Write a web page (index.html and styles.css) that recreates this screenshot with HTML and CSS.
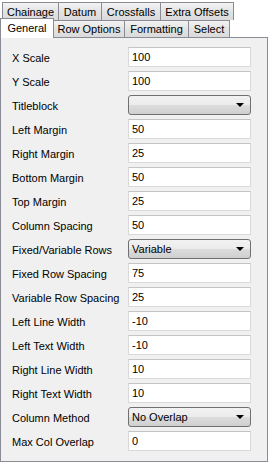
FILE: index.html
```html
<!DOCTYPE html>
<html lang="en">
  <head>
    <meta charset="UTF-8" />
    <meta name="viewport" content="width=device-width, initial-scale=1.0" />
    <title>Plot Settings</title>
    <link rel="stylesheet" href="styles.css">
  </head>
  <body>
    <div class="tabs">
      <div class="tab-row tab-row-back">
        <span class="tab tab-chainage">Chainage</span>
        <span class="tab tab-datum">Datum</span>
        <span class="tab tab-crossfalls">Crossfalls</span>
        <span class="tab tab-extra">Extra Offsets</span>
      </div>
      <div class="tab-row tab-row-front">
        <span class="tab tab-general active">General</span>
        <span class="tab tab-rows">Row Options</span>
        <span class="tab tab-format">Formatting</span>
        <span class="tab tab-select">Select</span>
      </div>
    </div>

    <div class="panel">
      <div class="form-row">
        <label>X Scale</label>
        <div class="field">100</div>
      </div>
      <div class="form-row">
        <label>Y Scale</label>
        <div class="field">100</div>
      </div>
      <div class="form-row">
        <label>Titleblock</label>
        <div class="combo"><span></span><i class="arrow"></i></div>
      </div>
      <div class="form-row">
        <label>Left Margin</label>
        <div class="field">50</div>
      </div>
      <div class="form-row">
        <label>Right Margin</label>
        <div class="field">25</div>
      </div>
      <div class="form-row">
        <label>Bottom Margin</label>
        <div class="field">50</div>
      </div>
      <div class="form-row">
        <label>Top Margin</label>
        <div class="field">25</div>
      </div>
      <div class="form-row">
        <label>Column Spacing</label>
        <div class="field">50</div>
      </div>
      <div class="form-row">
        <label>Fixed/Variable Rows</label>
        <div class="combo"><span>Variable</span><i class="arrow"></i></div>
      </div>
      <div class="form-row">
        <label>Fixed Row Spacing</label>
        <div class="field">75</div>
      </div>
      <div class="form-row">
        <label>Variable Row Spacing</label>
        <div class="field">25</div>
      </div>
      <div class="form-row">
        <label>Left Line Width</label>
        <div class="field">-10</div>
      </div>
      <div class="form-row">
        <label>Left Text Width</label>
        <div class="field">-10</div>
      </div>
      <div class="form-row">
        <label>Right Line Width</label>
        <div class="field">10</div>
      </div>
      <div class="form-row">
        <label>Right Text Width</label>
        <div class="field">10</div>
      </div>
      <div class="form-row">
        <label>Column Method</label>
        <div class="combo"><span>No Overlap</span><i class="arrow"></i></div>
      </div>
      <div class="form-row">
        <label>Max Col Overlap</label>
        <div class="field">0</div>
      </div>
    </div>
  </body>
</html>
```

FILE: styles.css
```css
* {
  font-family: "Liberation Sans", Arial, sans-serif;
  margin: 0;
  padding: 0;
  box-sizing: border-box;
}

body {
  background: #fff;
  font-size: 11px;
  color: #000;
  width: 271px;
  height: 465px;
  overflow: hidden;
}

/* Tabs */
.tab-row {
  display: flex;
}

.tab-row-back {
  padding: 2px 0 0 2px;
  height: 20px;
}

.tab-row-front {
  height: 17px;
  align-items: flex-end;
}

.tab {
  display: flex;
  align-items: center;
  justify-content: center;
  height: 100%;
  border: 1px solid #898c95;
  border-bottom: none;
  margin-left: -1px;
  background: linear-gradient(#f3f3f3, #e3e3e3 50%, #dadada);
  white-space: nowrap;
}

.tab:first-child {
  margin-left: 0;
}

.tab-row-back .tab {
  height: 18px;
}

.tab-chainage { width: 57px; }
.tab-datum { width: 44px; }
.tab-crossfalls { width: 60px; }
.tab-extra { width: 74px; }
.tab-general { width: 54px; }
.tab-rows { width: 72px; }
.tab-format { width: 65px; }
.tab-select { width: 42px; }

.tab.active {
  position: relative;
  z-index: 1;
  height: 20px;
  margin-bottom: -1px;
  padding-bottom: 2px;
  background: #fff;
}

/* Panel */
.panel {
  width: 268px;
  height: 425px;
  border: 1px solid #898c95;
  background: #f0f0f0;
  padding: 9px 0 0 11px;
  display: flex;
  flex-direction: column;
  gap: 4px;
}

.form-row {
  display: grid;
  grid-template-columns: 116px 123px;
  align-items: center;
  height: 20px;
}

.form-row label {
  padding-top: 1px;
}

.field {
  height: 20px;
  line-height: 18px;
  padding: 0 3px;
  background: #fff;
  border: 1px solid #d9d9d9;
  border-top-color: #c4c4c4;
}

.combo {
  display: flex;
  justify-content: space-between;
  align-items: center;
  height: 20px;
  padding: 0 6px 0 3px;
  border: 1px solid #707070;
  border-radius: 3px;
  background: linear-gradient(#f2f2f2, #ebebeb 50%, #dddddd 50%, #cfcfcf);
}

.arrow {
  width: 0;
  height: 0;
  border-left: 4px solid transparent;
  border-right: 4px solid transparent;
  border-top: 4px solid #000;
}
```
